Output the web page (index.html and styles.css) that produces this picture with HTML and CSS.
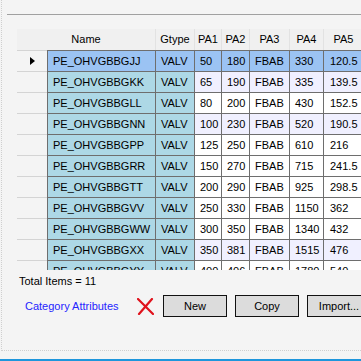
FILE: index.html
```html
<!DOCTYPE html>
<html lang="en">
<head>
  <meta charset="UTF-8" />
  <title>Category Items</title>
  <link rel="stylesheet" href="styles.css">
</head>
<body>
  <div class="panel">
    <div class="top-rule"></div>

    <div class="grid">
      <div class="grid-head">
        <div class="hcell h-name">Name</div>
        <div class="hcell c-gtype">Gtype</div>
        <div class="hcell c-pa1">PA1</div>
        <div class="hcell c-pa2">PA2</div>
        <div class="hcell c-pa3">PA3</div>
        <div class="hcell c-pa4">PA4</div>
        <div class="hcell c-pa5">PA5</div>
      </div>
      <div class="grid-body" id="rows"></div>
    </div>

    <div class="total">Total Items = 11</div>

    <div class="actions">
      <a class="link">Category Attributes</a>
      <svg class="del" width="17" height="17" viewBox="0 0 17 17">
        <path d="M1 1 L16 16 M15 1 L2 16" stroke="#e0121c" stroke-width="2.2" fill="none" stroke-linecap="round"/>
      </svg>
      <button class="btn">New</button>
      <button class="btn">Copy</button>
      <button class="btn">Import...</button>
    </div>
  </div>
  <div class="status-bar"></div>

  <script>
    const items = [
      ["PE_OHVGBBGJJ", "VALV", 50, 180, "FBAB", 330, "120.5"],
      ["PE_OHVGBBGKK", "VALV", 65, 190, "FBAB", 335, "139.5"],
      ["PE_OHVGBBGLL", "VALV", 80, 200, "FBAB", 430, "152.5"],
      ["PE_OHVGBBGNN", "VALV", 100, 230, "FBAB", 520, "190.5"],
      ["PE_OHVGBBGPP", "VALV", 125, 250, "FBAB", 610, "216"],
      ["PE_OHVGBBGRR", "VALV", 150, 270, "FBAB", 715, "241.5"],
      ["PE_OHVGBBGTT", "VALV", 200, 290, "FBAB", 925, "298.5"],
      ["PE_OHVGBBGVV", "VALV", 250, 330, "FBAB", 1150, "362"],
      ["PE_OHVGBBGWW", "VALV", 300, 350, "FBAB", 1340, "432"],
      ["PE_OHVGBBGXX", "VALV", 350, 381, "FBAB", 1515, "476"],
      ["PE_OHVGBBGYY", "VALV", 400, 406, "FBAB", 1780, "540"]
    ];
    const cols = ["c-name", "c-gtype", "c-pa1", "c-pa2", "c-pa3", "c-pa4", "c-pa5"];
    const tinted = [1, 3, 9];
    const rows = document.getElementById('rows');

    items.forEach((item, i) => {
      const row = document.createElement('div');
      row.className = 'row';
      if (i === 0) row.classList.add('selected');
      if (tinted.includes(i)) row.classList.add('tint');

      const head = document.createElement('div');
      head.className = 'row-head';
      if (i === 0) head.innerHTML = '<span class="arrow"></span>';
      row.appendChild(head);

      item.forEach((val, j) => {
        const cell = document.createElement('div');
        cell.className = 'cell ' + cols[j];
        cell.textContent = val;
        row.appendChild(cell);
      });
      rows.appendChild(row);
    });
  </script>
</body>
</html>
```

FILE: styles.css
```css
body {
  margin: 0;
  background-color: #f4f4f4;
  font-family: 'Liberation Sans', Arial, sans-serif;
  font-size: 11px;
  color: #000;
  overflow: hidden;
}

.panel {
  height: 351px;
  box-sizing: border-box;
  border-left: 1px dotted #cfcfcf;
  border-bottom: 1px dotted #cfcfcf;
  margin-left: 1px;
  padding-top: 14px;
}

.top-rule {
  height: 1px;
  margin-left: 5px;
  background-color: #a0a0a0;
}

.grid {
  margin-top: 14px;
  margin-left: 15px;
  height: 241px;
  overflow: hidden;
}

.grid-head {
  display: flex;
  height: 21px;
  background-color: #f0f0f0;
  white-space: nowrap;
}
.hcell {
  box-sizing: border-box;
  line-height: 21px;
  text-align: center;
  border-right: 1px solid #e2e2e2;
  flex-shrink: 0;
}
.h-name {
  width: 139px;
}

.row {
  display: flex;
  height: 21px;
  white-space: nowrap;
}
.row:first-child {
  height: 22px;
}
.row:first-child .cell,
.row:first-child .row-head {
  border-top: 1px solid #d4d4d4;
}
.row:first-child .cell {
  border-top-color: #6e6e6e;
}

.row-head {
  width: 30px;
  flex-shrink: 0;
  box-sizing: border-box;
  border-bottom: 1px solid #d4d4d4;
  display: flex;
  align-items: center;
  padding-left: 13px;
}
.arrow {
  width: 0;
  height: 0;
  border-top: 4px solid transparent;
  border-bottom: 4px solid transparent;
  border-left: 5px solid #000;
}

.cell {
  flex-shrink: 0;
  box-sizing: border-box;
  border-right: 1px solid #6e6e6e;
  border-bottom: 1px solid #6e6e6e;
  padding-left: 5px;
  line-height: 20px;
  background-color: #fff;
}
.c-name {
  width: 109px;
  border-left: 1px solid #6e6e6e;
  background-color: #add8e6;
}
.c-gtype { width: 39px; }
.c-pa1 { width: 27px; }
.c-pa2 { width: 28px; }
.c-pa3 { width: 40px; }
.c-pa4 { width: 34px; }
.c-pa5 { width: 40px; }

.cell.c-pa5 {
  padding-left: 6px;
}

.cell.c-gtype {
  background-color: #add8e6;
}
.row.tint .cell {
  background-color: #f0f0ff;
}
.row.tint .c-name,
.row.tint .c-gtype {
  background-color: #add8e6;
}
.row.selected .cell {
  background-color: #9bc3f3;
}

.total {
  margin-top: 5px;
  margin-left: 17px;
  line-height: 13px;
}

.actions {
  display: flex;
  align-items: center;
  margin-top: 7px;
  padding-left: 23px;
  white-space: nowrap;
}
.link {
  color: #2424ff;
  font-size: 11px;
  width: 112px;
  flex-shrink: 0;
}
.del {
  flex-shrink: 0;
  margin-right: 9px;
}
.btn {
  width: 64px;
  height: 22px;
  margin-right: 8px;
  flex-shrink: 0;
  background-color: #dcdcdc;
  border: 1px solid #111;
  border-radius: 0;
  font-family: 'Liberation Sans', Arial, sans-serif;
  font-size: 11px;
  color: #000;
  padding: 0;
}

.status-bar {
  margin-top: 8px;
  height: 2px;
  background-color: #1e96dc;
}
```
